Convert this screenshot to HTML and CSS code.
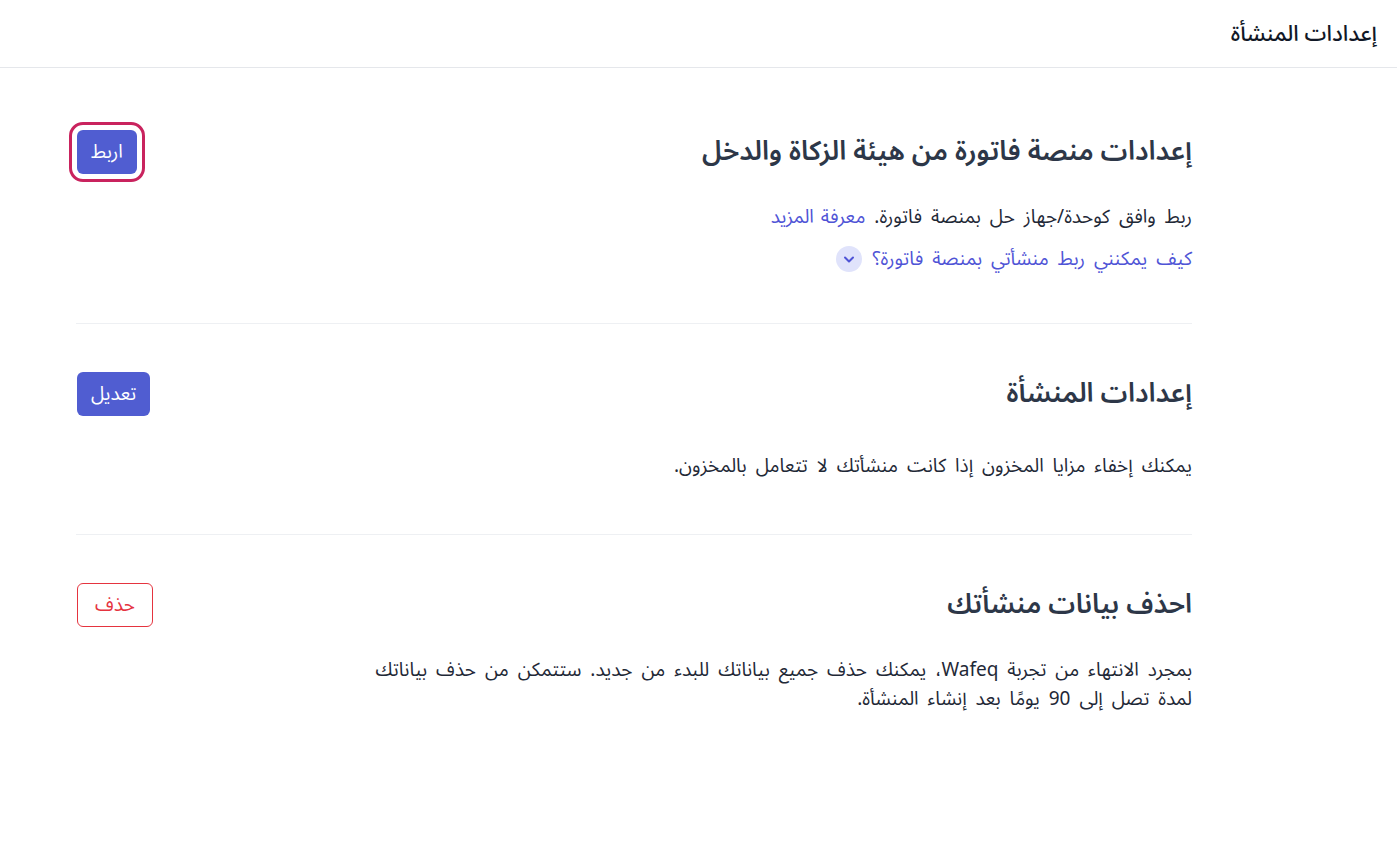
FILE: index.html
```html
<!DOCTYPE html>
<html lang="ar" dir="rtl">
<head>
	<meta charset="utf-8">
	<title>إعدادات المنشأة</title>

	<link rel="stylesheet" href="styles.css">
</head>
<body>
	<header class="page-header">
		<h1 class="page-title">إعدادات المنشأة</h1>
	</header>

	<main class="settings">
		<section class="setting">
			<div class="setting-head">
				<h2 class="setting-title">إعدادات منصة فاتورة من هيئة الزكاة والدخل</h2>
				<button class="btn btn-primary is-focused">اربط</button>
			</div>
			<p class="setting-text">ربط وافق كوحدة/جهاز حل بمنصة فاتورة. <a class="link" href="#">معرفة المزيد</a></p>
			<div class="faq">
				<a class="link" href="#">كيف يمكنني ربط منشأتي بمنصة فاتورة؟</a>
				<span class="faq-toggle">
					<svg width="14" height="14" viewBox="0 0 14 14"><path d="M3 5.5 7 9.5l4-4" fill="none" stroke="currentColor" stroke-width="2" stroke-linecap="round" stroke-linejoin="round"/></svg>
				</span>
			</div>
		</section>

		<section class="setting">
			<div class="setting-head">
				<h2 class="setting-title">إعدادات المنشأة</h2>
				<button class="btn btn-primary">تعديل</button>
			</div>
			<p class="setting-text setting-text-loose">يمكنك إخفاء مزايا المخزون إذا كانت منشأتك لا تتعامل بالمخزون.</p>
		</section>

		<section class="setting">
			<div class="setting-head">
				<h2 class="setting-title">احذف بيانات منشأتك</h2>
				<button class="btn btn-danger">حذف</button>
			</div>
			<p class="setting-text">بمجرد الانتهاء من تجربة Wafeq، يمكنك حذف جميع بياناتك للبدء من جديد. ستتمكن من حذف بياناتك<br>لمدة تصل إلى 90 يومًا بعد إنشاء المنشأة.</p>
		</section>
	</main>
</body>
</html>
```

FILE: styles.css
```css
:root {
	font-family: "Noto Sans Arabic", "DejaVu Sans", sans-serif;
	color: #1f2937;
}
body {
	margin: 0;
	background: #fff;
}
.page-header {
	height: 68px;
	display: flex;
	align-items: center;
	padding: 0 20px;
	border-bottom: 1px solid #e5e7eb;
	box-sizing: border-box;
}
.page-title {
	margin: 0;
	font-size: 22px;
	font-weight: 500;
	color: #111827;
}
.settings {
	margin: 0 205px 0 76px;
	padding-top: 14px;
}
.setting {
	padding: 48px 0 51px;
	border-bottom: 1px solid #eef0f3;
}
.setting:last-child {
	border-bottom: none;
}
.setting-head {
	display: flex;
	justify-content: space-between;
	align-items: center;
	height: 44px;
}
.setting-title {
	margin: 0;
	font-size: 27px;
	line-height: 44px;
	font-weight: 600;
	color: #2d3748;
}
.setting-text {
	margin: 29px 0 0;
	font-size: 19px;
	line-height: 29px;
	word-spacing: 4px;
}
.setting-text-loose {
	margin: 36px 0 2px;
}
.setting-text .link {
	word-spacing: 2px;
}
.link {
	color: #4f54d6;
	text-decoration: none;
}
.faq {
	display: flex;
	align-items: center;
	gap: 10px;
	margin-top: 14px;
	font-size: 19px;
	line-height: 26px;
	word-spacing: 4px;
}
.faq-toggle {
	width: 26px;
	height: 26px;
	border-radius: 50%;
	background: #e0e3fb;
	color: #4f54d6;
	display: inline-flex;
	align-items: center;
	justify-content: center;
}
.btn {
	height: 44px;
	margin-left: 1px;
	padding: 0 14px;
	border-radius: 6px;
	font-family: inherit;
	font-size: 19px;
	font-weight: 400;
	cursor: pointer;
}
.btn-primary {
	background: #505dd1;
	color: #fff;
	border: none;
}
.btn-danger {
	background: #fff;
	color: #e5343f;
	border: 1px solid #e5343f;
	padding: 0 17px;
}
.is-focused {
	outline: 3px solid #c9235e;
	outline-offset: 5px;
}
```
